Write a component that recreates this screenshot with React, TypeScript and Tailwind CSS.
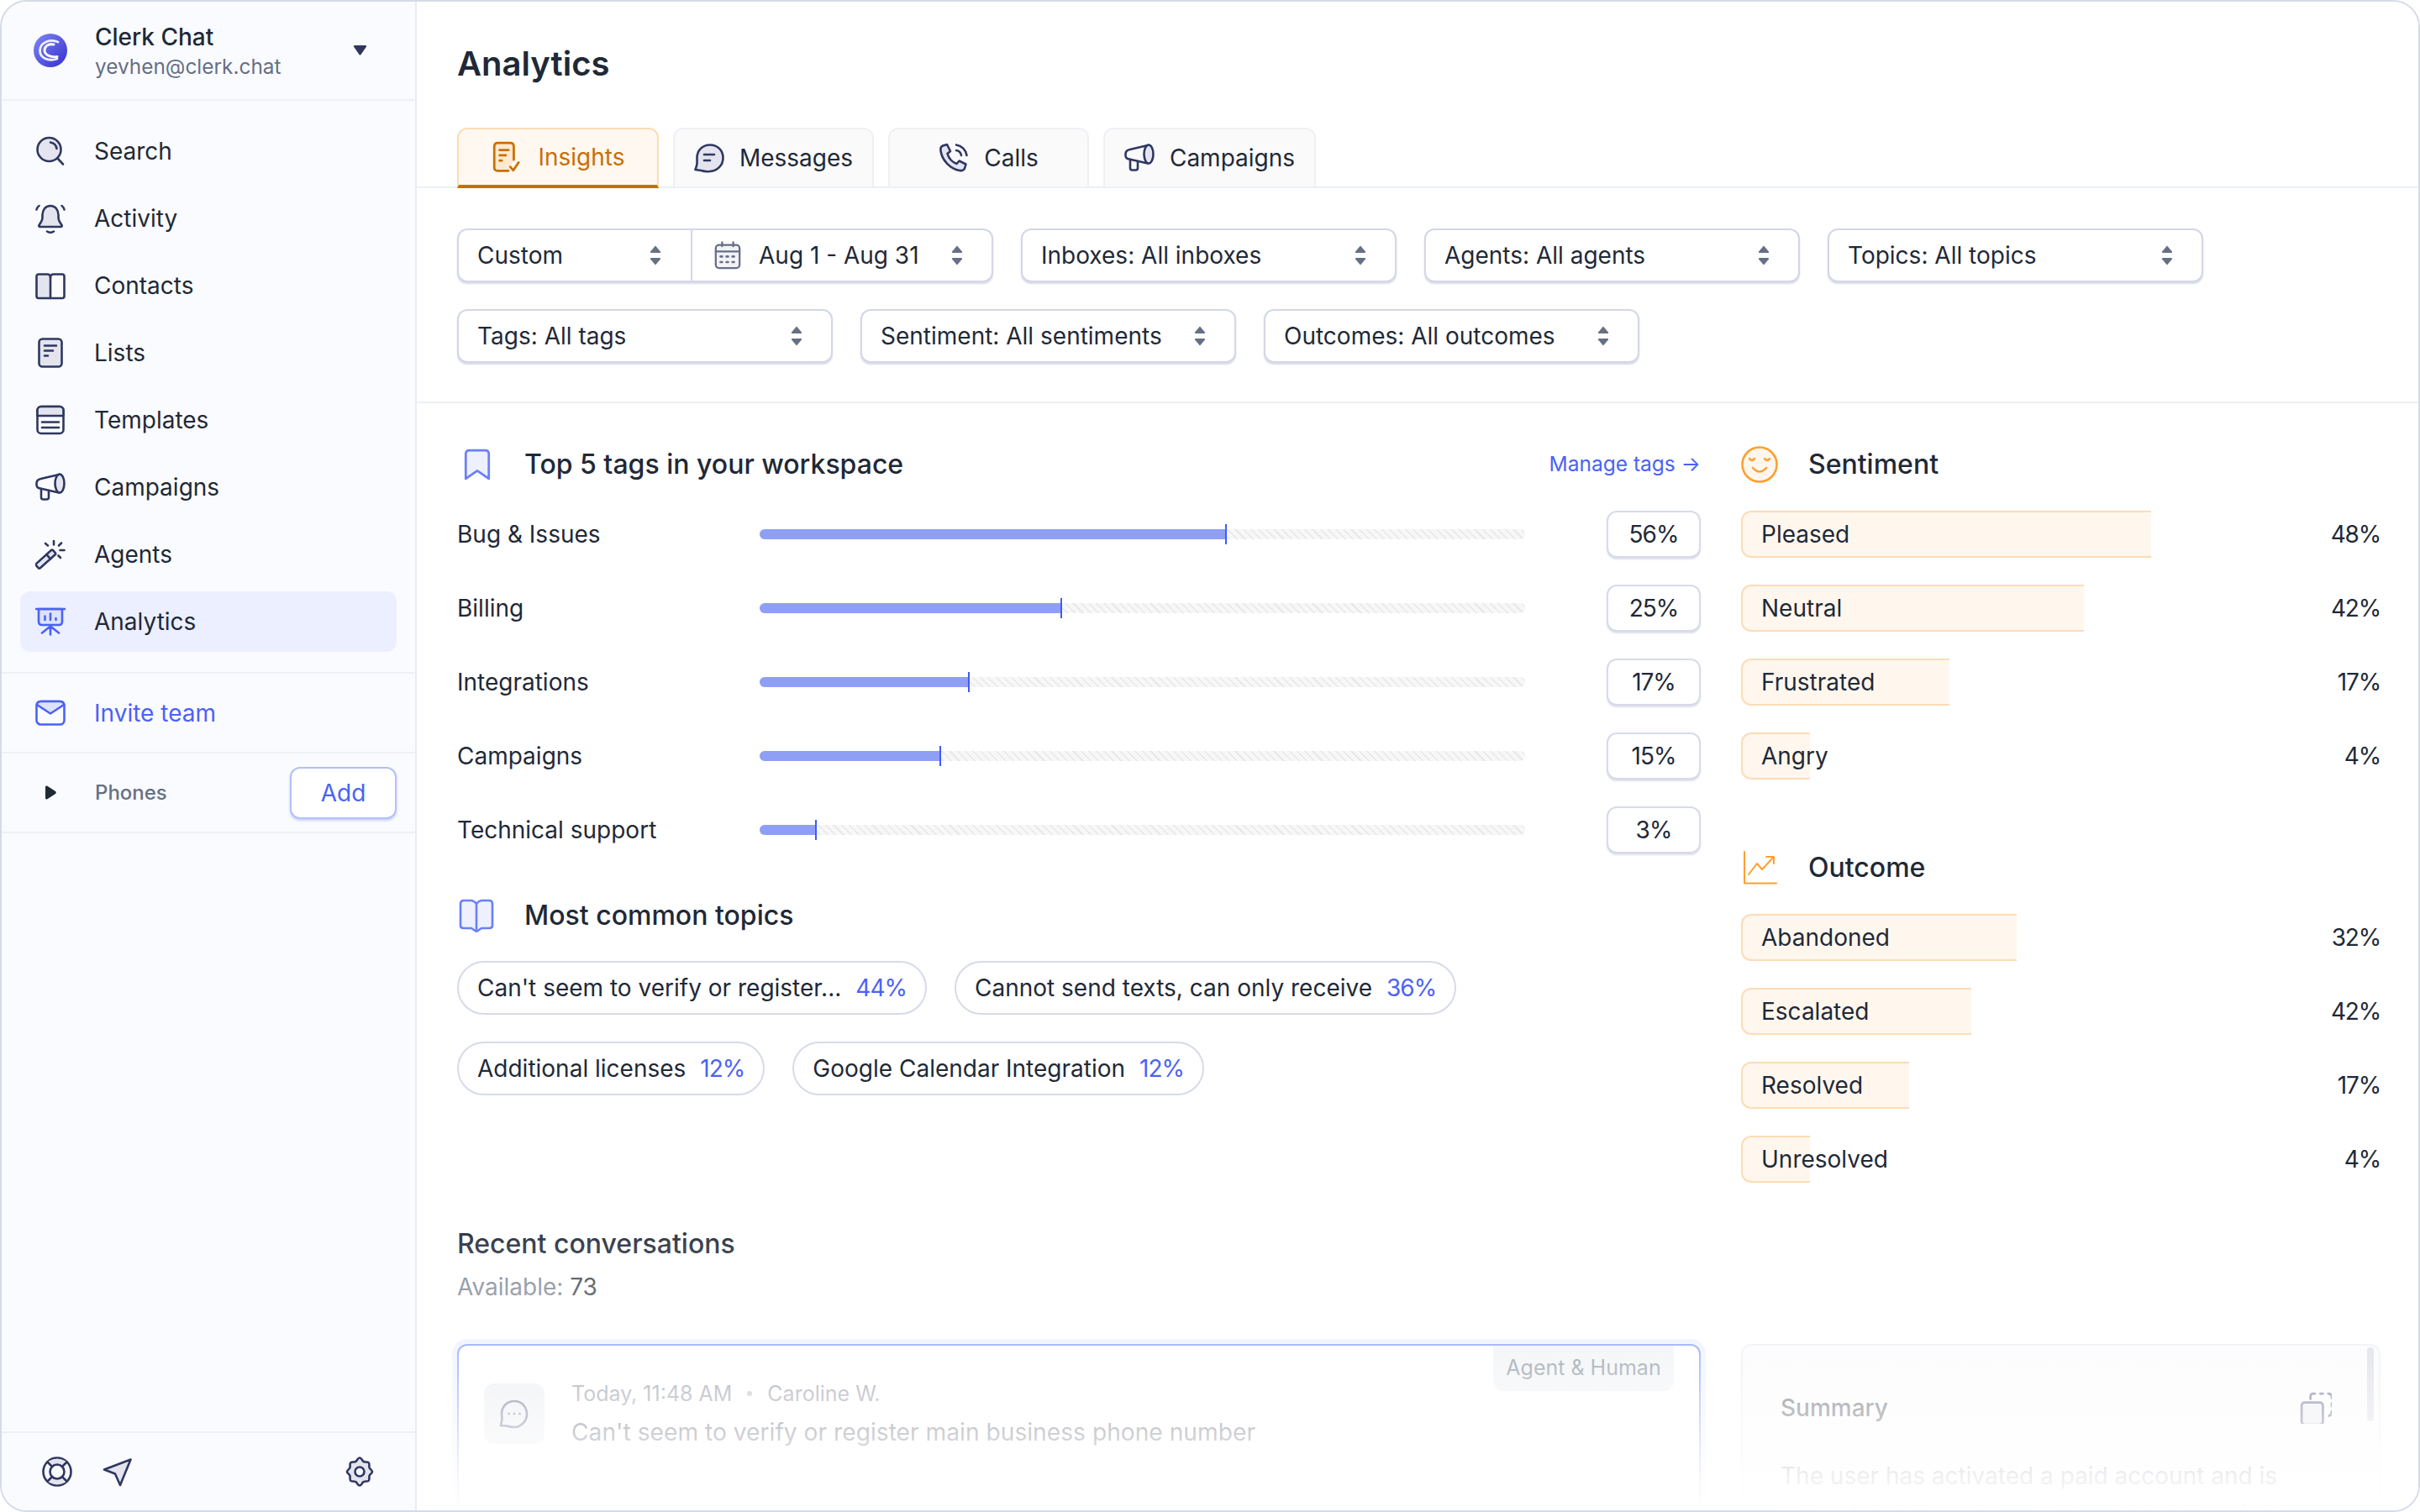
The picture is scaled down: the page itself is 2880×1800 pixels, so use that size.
import React from "react";

const N = "#2f3760";
const NF = "#e3e4ee";
const B = "#4b62f5";
const O = "#ff9f2f";

type P = { s?: number; c?: string; f?: string; w?: number; vb?: string; children: React.ReactNode };
const Ic = ({ s = 36, c = N, f = "none", w = 2.6, vb = "0 0 36 36", children }: P) => (
  <svg width={s} height={s} viewBox={vb} fill={f} stroke={c} strokeWidth={w} strokeLinecap="round" strokeLinejoin="round" className="shrink-0">
    {children}
  </svg>
);

const SearchI = () => (
  <Ic>
    <circle cx="16.5" cy="16" r="14" fill={NF} />
    <path d="M26.5 26.5L33 33.5M18 7.5a9 9 0 0 1 7.5 7.5" fill="none" />
  </Ic>
);
const BellI = () => (
  <Ic>
    <path d="M18 3c-6 0-9.5 5-9.5 11v3c0 3.500-2 6-4 9-.5 1 0 2 1 2h25c1 0 1.500-1 1-2-2-3-4-5.500-4-9v-3c0-6-3.500-11-9.500-11z" fill={NF} />
    <path d="M14 33.500q4 2.500 8 0M1.500 7.500q.5-3 3-4.500M34.500 7.500q-.5-3-3-4.500" fill="none" />
  </Ic>
);
const BookI = () => (
  <Ic>
    <path d="M18 33V8c0-2-1.500-3.500-3.500-3.500H4C2.500 4.500 1.500 5.500 1.500 7v23.500c0 1.500 1 2.500 2.500 2.500z" fill={NF} />
    <path d="M18 8c0-2 1.500-3.500 3.500-3.500H32c1.500 0 2.500 1 2.500 2.500v23.500c0 1.500-1 2.500-2.500 2.500H18" />
  </Ic>
);
const ListI = () => (
  <Ic>
    <rect x="4.500" y="1.500" width="27" height="33" rx="4" fill={NF} />
    <path d="M11 9.500h14M11 15.500h10M11 21.500h4" fill="none" />
  </Ic>
);
const TemplI = () => (
  <Ic>
    <rect x="2.500" y="2" width="31" height="32" rx="4.500" fill="none" />
    <path d="M2.500 13V6.500c0-2.500 2-4.500 4.500-4.500h22c2.500 0 4.500 2 4.500 4.500V13z" fill={NF} />
    <path d="M8 20.500h20M8 27h20" />
  </Ic>
);
const MegaI = ({ s = 36 }: { s?: number }) => (
  <Ic s={s}>
    <path d="M28 3L6.500 8Q1.500 9 1.500 13.500V15Q1.500 19 6 19.500L28 24.500" fill="none" />
    <ellipse cx="29" cy="13.500" rx="5.500" ry="11" fill={NF} />
    <path d="M7 20v10q0 2.500 2.500 2.500h4q2.500 0 2.500-2.500v-8" fill="none" />
  </Ic>
);
const WandI = () => (
  <Ic>
    <g transform="rotate(-42 12 24)">
      <rect x="-1" y="20.500" width="27" height="7" rx="1.500" fill={NF} />
      <path d="M17 20.500v7" />
    </g>
    <path d="M22 2v4.500M12 5l3 2.500M31 4.500l-3 3M29.500 13h5M27.500 19.500l2.500 2.500" fill="none" />
  </Ic>
);
const ChartI = () => (
  <Ic c={B}>
    <path d="M4 3v15q0 4 4 4h20q4 0 4-4V3z" fill="#dde2fd" />
    <path d="M1 3h34M18 22.500V33.500M18 23.500L8 31.500M18 23.500l10 8M11.500 11.500v4.500M18 8.500v7.500M24.500 14v2" fill="none" />
  </Ic>
);
const MailI = () => (
  <Ic c={B}>
    <rect x="1.500" y="4" width="33" height="27.500" rx="5" fill="none" />
    <path d="M2 8q0-4 5-4h22q5 0 5 4l-16 10.500z" fill="#dde2fd" />
  </Ic>
);
const LifeI = () => (
  <Ic>
    <circle cx="18" cy="18" r="16.500" />
    <path d="M6.500 6.500Q18-1 29.500 6.500L24 12q-6-4-12 0zM6.500 29.500Q18 37 29.500 29.500L24 24q-6 4-12 0z" fill={NF} stroke="none" />
    <circle cx="18" cy="18" r="8.500" />
    <path d="M6.500 6.500L12 12M29.500 6.500L24 12M6.500 29.500L12 24M29.500 29.500L24 24" />
  </Ic>
);
const SendI = () => (
  <Ic>
    <path d="M2 15.500L33.500 3.500 21 34 15 20.500z" fill={NF} />
  </Ic>
);
const GearI = () => (
  <Ic>
    <path d="M18 1.500c2 0 2.500 2 4 4 1.500 1.500 5 .5 6.500 1.500 1.800 1.500.5 4 1 6 .5 2 3.500 3 3.500 5s-3 3-3.500 5c-.5 2 .8 4.500-1 6-1.500 1-5 0-6.500 1.500-1.500 2-2 4-4 4s-2.500-2-4-4c-1.500-1.500-5-.5-6.500-1.500-1.800-1.500-.5-4-1-6-.5-2-3.500-3-3.500-5s3-3 3.500-5c.5-2-.8-4.500 1-6 1.500-1 5-0 6.500-1.500 1.500-2 2-4 4-4z" fill={NF} />
    <circle cx="18" cy="18" r="5.500" fill="#fafbff" />
  </Ic>
);
const Updown = () => (
  <svg width="14" height="24" viewBox="0 0 14 24" fill="#667085" className="shrink-0">
    <path d="M7 0.500L13 7.500Q13.500 9 12 9H2Q.5 9 1 7.500z" />
    <path d="M7 23.500L13 16.500Q13.500 15 12 15H2Q.5 15 1 16.500z" />
  </svg>
);
const Cal = () => (
  <Ic s={34} c="#667085" w={2.4} vb="0 0 34 36">
    <rect x="2" y="5" width="30" height="29" rx="4" fill="#f2f3f6" />
    <path d="M2 13h30M10 1.500v5M24 1.500v5" />
    <path d="M8 19.500h2M15.500 19.500h2M23 19.500h2M8 26.500h2M15.500 26.500h2M23 26.500h2" strokeWidth="2.800" />
  </Ic>
);

const Item = ({ icon, label, active, blue }: { icon: React.ReactNode; label: string; active?: boolean; blue?: boolean }) => (
  <div className={active ? "flex h-[72px] items-center gap-[34px] rounded-[12px] bg-[#ecefff] pl-[18px]" : "flex h-[72px] items-center gap-[34px] rounded-[12px] pl-[18px]"}>
    {icon}
    <span className={blue ? "text-[28px] text-[#4b62f5]" : "text-[28px] text-[#1f2937]"}>{label}</span>
  </div>
);

const Sidebar = () => (
  <aside className="flex h-full w-[494px] shrink-0 flex-col border-r-2 border-[#e9ecf2] bg-[#fafbff]">
    <div className="flex h-[118px] shrink-0 items-center border-b-2 border-[#eef0f5] pr-[57px] pl-[38px]">
      <svg width="40" height="40" viewBox="0 0 40 40" className="shrink-0">
        <defs>
          <linearGradient id="lg" x1="0" y1="0" x2="1" y2="1">
            <stop offset="0" stopColor="#7f86f6" />
            <stop offset="1" stopColor="#3530cc" />
          </linearGradient>
        </defs>
        <circle cx="20" cy="20" r="20" fill="url(#lg)" />
        <path d="M29 10C20 6 8 10 7.500 20c0 9 10 13.500 20.500 10" fill="none" stroke="#eef0ff" strokeWidth="2.800" strokeLinecap="round" />
        <path d="M24 13c-6-1.500-11 2-11 7 0 5 7 9 15 7.500" fill="none" stroke="#f6f6ff" strokeWidth="3" strokeLinecap="round" />
      </svg>
      <div className="ml-[33px] flex flex-1 flex-col pt-[2px]">
        <span className="text-[28px] leading-[36px] font-medium text-[#1f2937]">Clerk Chat</span>
        <span className="text-[24.4px] leading-[34px] text-[#667085]">yevhen@clerk.chat</span>
      </div>
      <svg width="17" height="12" viewBox="0 0 16 12" fill={N}>
        <path d="M1.500 0h13q1.500 0 1 1.500L9 11q-1 1-2 0L.5 1.500Q0 0 1.500 0z" />
      </svg>
    </div>
    <nav className="flex shrink-0 flex-col gap-[8px] border-b-2 border-[#eef0f5] px-[22px] py-[24px]">
      <Item icon={<SearchI />} label="Search" />
      <Item icon={<BellI />} label="Activity" />
      <Item icon={<BookI />} label="Contacts" />
      <Item icon={<ListI />} label="Lists" />
      <Item icon={<TemplI />} label="Templates" />
      <Item icon={<MegaI />} label="Campaigns" />
      <Item icon={<WandI />} label="Agents" />
      <Item icon={<ChartI />} label="Analytics" active />
    </nav>
    <div className="flex h-[95px] shrink-0 items-center border-b-2 border-[#eef0f5] px-[22px]">
      <div className="w-full">
        <Item icon={<MailI />} label="Invite team" blue />
      </div>
    </div>
    <div className="flex h-[95px] shrink-0 items-center border-b-2 border-[#eef0f5] pr-[22px] pl-[40px]">
      <span className="flex w-[36px] justify-center">
        <svg width="13" height="17" viewBox="0 0 13 17" fill="#1f2937">
          <path d="M0 2Q0 0 2 .5L12 7q1.500 1.500 0 3L2 16.500Q0 17 0 15z" />
        </svg>
      </span>
      <span className="ml-[35px] flex-1 text-[24px] font-medium text-[#667085]">Phones</span>
      <span className="flex h-[62px] w-[127px] items-center justify-center rounded-[12px] border-2 border-[#b4c0f8] bg-white text-[28px] text-[#4b62f5] shadow-[0_2px_3px_#c8d0f8]">Add</span>
    </div>
    <div className="flex-1" />
    <div className="flex h-[94px] shrink-0 items-center border-t-2 border-[#eef0f5] pr-[48px] pl-[48px]">
      <LifeI />
      <span className="ml-[36px] flex-1">
        <SendI />
      </span>
      <GearI />
    </div>
  </aside>
);

const Tab = ({ icon, label, w, active }: { icon: React.ReactNode; label: string; w: string; active?: boolean }) => (
  <div
    className={
      active
        ? `${w} relative -mb-[2px] flex h-[72px] items-center justify-center gap-[18px] rounded-t-[12px] border-x-2 border-t-2 border-b-4 border-[#fcdcb5] border-b-[#c96f00] bg-[#fff8f0] text-[28px] text-[#c96f00]`
        : `${w} flex h-[70px] items-center justify-center gap-[18px] rounded-t-[12px] border-x-2 border-t-2 border-[#eff0f4] bg-[#fafafb] text-[28px] text-[#1f2937]`
    }
  >
    {icon}
    <span>{label}</span>
  </div>
);

const Sel = ({ label, w = "w-[447px]" }: { label: string; w?: string }) => (
  <div className={`${w} flex h-[64px] items-center justify-between rounded-[12px] border-2 border-[#d3d7e6] bg-white pr-[34px] pl-[22px] text-[28px] text-[#1f2937] shadow-[0_2px_2px_#d8dbe8]`}>
    <span>{label}</span>
    <Updown />
  </div>
);

const Filters = () => (
  <div className="flex shrink-0 flex-col gap-[32px] border-b-2 border-[#edf0f4] pt-[48px] pb-[46px] pl-[48px]">
    <div className="flex gap-[33px]">
      <div className="flex h-[64px] w-[638px] items-center rounded-[12px] border-2 border-[#d3d7e6] bg-white text-[28px] text-[#1f2937] shadow-[0_2px_2px_#d8dbe8]">
        <div className="flex h-full w-[278px] items-center justify-between border-r-2 border-[#d3d7e6] pr-[35px] pl-[22px]">
          <span>Custom</span>
          <Updown />
        </div>
        <div className="flex flex-1 items-center pr-[34px] pl-[25px]">
          <Cal />
          <span className="ml-[20px] flex-1">Aug 1 - Aug 31</span>
          <Updown />
        </div>
      </div>
      <Sel label="Inboxes: All inboxes" />
      <Sel label="Agents: All agents" />
      <Sel label="Topics: All topics" />
    </div>
    <div className="flex gap-[33px]">
      <Sel label="Tags: All tags" />
      <Sel label="Sentiment: All sentiments" />
      <Sel label="Outcomes: All outcomes" />
    </div>
  </div>
);

const tags = [
  { l: "Bug & Issues", p: "56%", w: 556 },
  { l: "Billing", p: "25%", w: 360 },
  { l: "Integrations", p: "17%", w: 250 },
  { l: "Campaigns", p: "15%", w: 216 },
  { l: "Technical support", p: "3%", w: 68 },
];

const TagRow = ({ l, p, w }: { l: string; p: string; w: number }) => (
  <div className="flex h-[56px] items-center">
    <span className="w-[360px] shrink-0 text-[28px] text-[#1f2937]">{l}</span>
    <div className="flex h-[24px] w-[911px] shrink-0 items-center">
      <div className="flex h-[12px] w-full items-center rounded-[6px] bg-[repeating-linear-gradient(45deg,#f7f7f8_0,#f7f7f8_5px,#e8e8ea_5px,#e8e8ea_6.5px)]">
        <div className="relative h-[12px] rounded-l-[6px] border-r-2 border-[#3f5bf6] bg-[#8e9ff5]" style={{ width: w }}>
          <span className="absolute top-[-6px] right-[-2px] h-[24px] w-[2px] bg-[#3f5bf6]" />
        </div>
      </div>
    </div>
    <span className="ml-auto flex h-[56px] w-[112px] items-center justify-center rounded-[12px] border-2 border-[#d7dbe8] bg-white text-[28px] tracking-[-1px] text-[#1f2937] shadow-[0_2px_2px_#dde0ea]">{p}</span>
  </div>
);

const Chip = ({ t, p }: { t: string; p: string }) => (
  <div className="flex h-[64px] items-center gap-[17px] rounded-full border-2 border-[#d7dbe8] bg-white pr-[22px] pl-[22px] text-[28px] text-[#1f2937]">
    <span>{t}</span>
    <span className="tracking-[-1px] text-[#4b62f5]">{p}</span>
  </div>
);

const Bar = ({ l, p, w }: { l: string; p: string; w: number }) => (
  <div className="flex h-[56px] items-center justify-between">
    <div className="h-[56px] shrink-0 rounded-l-[12px] border-y-2 border-l-2 border-[#fddcb5] bg-[#fff7ee]" style={{ width: w }}>
      <div className="flex h-full w-[300px] items-center pl-[22px] text-[28px] text-[#1f2937]">{l}</div>
    </div>
    <span className="text-[28px] tracking-[-1.2px] text-[#1f2937]">{p}</span>
  </div>
);

const H = ({ icon, t, mx = "gap-[36px]" }: { icon: React.ReactNode; t: string; mx?: string }) => (
  <div className={`flex h-[40px] items-center ${mx}`}>
    {icon}
    <span className="text-[32px] font-medium text-[#1f2937]">{t}</span>
  </div>
);

const Main = () => (
  <main className="relative flex h-full flex-1 flex-col overflow-hidden bg-white">
    <div className="flex h-[150px] shrink-0 items-start pt-[52px] pl-[48px]">
      <h1 className="text-[40px] leading-[44px] font-semibold text-[#1f2937]">Analytics</h1>
    </div>
    <div className="flex h-[72px] shrink-0 gap-[17px] border-b-2 border-[#edf0f4] pl-[48px]">
      <Tab
        w="w-[240px]"
        active
        label="Insights"
        icon={
          <Ic c="#c96f00" s={38}>
            <path d="M20 33.500H8q-4 0-4-4V6q0-4 4-4h14q4 0 4 4v15" fill="#ffe9cf" />
            <path d="M10 10h10M10 16h7M10 22h2.500M22 29l3.500 4 6-9" fill="none" />
          </Ic>
        }
      />
      <Tab
        w="w-[239px]"
        label="Messages"
        icon={
          <Ic>
            <path d="M19 2.500C10 2.500 3.500 9 3.500 18c0 3 .5 6-.5 9.500L1.500 32l7 1c3 1 6.500 1.500 10.500 1 8.500-.5 15.500-7 15.500-16S28 2.500 19 2.500z" fill={NF} />
            <path d="M12 14h12M12 21h7" fill="none" />
          </Ic>
        }
      />
      <Tab
        w="w-[239px]"
        label="Calls"
        icon={
          <Ic>
            <path d="M5 3.500l5-1.500 4 8-3.500 3c1.500 5 6 10 11 12l3-3.500 8 4-1.500 5c-1 2-3.500 3-6 2.500C14 31 4 21 2.500 9.500 2 7 3 4.500 5 3.500z" fill={NF} />
            <path d="M21 2.500c6.500 1 11.500 6 12.500 12.500M21 9c3 .5 5.500 3 6 6" fill="none" />
          </Ic>
        }
      />
      <Tab w="w-[253px]" label="Campaigns" icon={<MegaI />} />
    </div>
    <Filters />
    <div className="flex shrink-0 gap-[48px] pl-[48px]">
      <div className="flex w-[1480px] shrink-0 flex-col pt-[53px]">
        <div className="flex items-center justify-between">
          <H
            t="Top 5 tags in your workspace"
            mx="gap-[37px] pl-[5px]"
            icon={
              <Ic s={38} c="#6a80f7" f="#eef0fe" vb="0 0 30 36">
                <path d="M2 34V6q0-4 4-4h18q4 0 4 4v28l-13-9z" />
              </Ic>
            }
          />
          <span className="-mt-[2px] text-[24.5px] text-[#4b62f5]">Manage tags →</span>
        </div>
        <div className="mt-[35px] flex flex-col gap-[32px]">
          {tags.map((t) => (
            <TagRow key={t.l} {...t} />
          ))}
        </div>
        <div className="mt-[54px]">
          <H
            t="Most common topics"
            mx="gap-[36px] pl-[2px]"
            icon={
              <Ic s={42} c="#6a80f7" f="#eef0fe" vb="0 0 42 42">
                <path d="M21 7q-3-4-7-4H6Q2 3 2 7v26q0 3 4 3h9l6 4 6-4h9q4 0 4-3V7q0-4-4-4h-8q-4 0-7 4zM21 7v30" />
              </Ic>
            }
          />
        </div>
        <div className="mt-[34px] flex gap-[33px]">
          <Chip t="Can't seem to verify or register..." p="44%" />
          <Chip t="Cannot send texts, can only receive" p="36%" />
        </div>
        <div className="mt-[32px] flex gap-[33px]">
          <Chip t="Additional licenses" p="12%" />
          <Chip t="Google Calendar Integration" p="12%" />
        </div>
      </div>
      <div className="flex w-[761px] shrink-0 flex-col pt-[53px]">
        <H
          t="Sentiment"
          icon={
            <Ic s={44} c={O} f="#fff7ee" vb="0 0 44 44">
              <circle cx="22" cy="22" r="20.500" />
              <path d="M10 15q3 4 6 0M28 15q3 4 6 0M14 26q8 9 16 0" fill="none" />
            </Ic>
          }
        />
        <div className="mt-[35px] flex flex-col gap-[32px]">
          <Bar l="Pleased" p="48%" w={488} />
          <Bar l="Neutral" p="42%" w={408} />
          <Bar l="Frustrated" p="17%" w={248} />
          <Bar l="Angry" p="4%" w={82} />
        </div>
        <div className="mt-[85px]">
          <H
            t="Outcome"
            icon={
              <Ic s={44} c={O} w={2} vb="0 0 44 44">
                <path d="M4 3v37.500h38M9 30l10-13 6 7 14-15M30 9h9v8" />
              </Ic>
            }
          />
        </div>
        <div className="mt-[35px] flex flex-col gap-[32px]">
          <Bar l="Abandoned" p="32%" w={328} />
          <Bar l="Escalated" p="42%" w={274} />
          <Bar l="Resolved" p="17%" w={200} />
          <Bar l="Unresolved" p="4%" w={82} />
        </div>
      </div>
    </div>
    <div className="shrink-0 pt-[53px] pl-[48px]">
      <div className="text-[32px] leading-[40px] font-medium text-[#1f2937]">Recent conversations</div>
      <div className="mt-[13px] text-[28px] leading-[36px] text-[#747d8c]">
        Available: <span className="text-[#2f3643]">73</span>
      </div>
    </div>
    <div className="flex flex-1 gap-[48px] pt-[50px] pl-[48px]">
      <div className="flex h-[260px] w-[1480px] shrink-0 rounded-[12px] border-2 border-[#607cf6] bg-white pl-[30px] shadow-[0_0_0_6px_#e9edfe]">
        <div className="mt-[45px] flex h-[72px] w-[72px] shrink-0 items-center justify-center rounded-[12px] bg-[#e5e7ec]">
          <Ic s={36} c={N}>
            <path d="M18 3C9 3 3 10 3 18c0 3 1 6 0 9L2 32l7 .5c3 1 6 1.500 9 1.500 8 0 15-7 15-15.500S27 3 18 3z" fill={NF} />
            <path d="M11.500 18h.1M18 18h.1M24.500 18h.1" />
          </Ic>
        </div>
        <div className="ml-[32px] flex flex-1 flex-col pt-[40px]">
          <div className="flex items-center gap-[18px] text-[25px] leading-[34px] text-[#6c7184]">
            <span>Today, 11:48 AM</span>
            <span className="h-[6px] w-[6px] rounded-full bg-[#9ea3b3]" />
            <span>Caroline W.</span>
          </div>
          <div className="mt-[9px] text-[28.2px] leading-[40px] text-[#1f2937]">Can't seem to verify or register main business phone number</div>
        </div>
        <div className="mr-[30px] flex h-[54px] w-[215px] shrink-0 items-center justify-center rounded-b-[12px] bg-[#ebeef2] text-[25px] text-[#626b7a]">Agent &amp; Human</div>
      </div>
      <div className="flex h-[260px] w-[761px] shrink-0 overflow-hidden rounded-[12px] border-2 border-[#e7e9f3] bg-[#fafafd] pt-[2px] pr-[2px]">
        <div className="flex flex-1 flex-col pt-[52px] pl-[45px]">
          <div className="flex items-center justify-between pr-[38px]">
            <span className="text-[28px] leading-[40px] font-medium text-[#1f2937]">Summary</span>
            <Ic s={38}>
              <rect x="2" y="12" width="24" height="25" rx="3.500" fill={NF} />
              <path d="M12 8V5q0-3 3-3h2M23 2h3M32 2q4 0 4 3v2M36 13v3M36 22q0 4-3 5" fill="none" />
            </Ic>
          </div>
          <div className="mt-[39px] w-[640px] text-[28px] leading-[44px] text-[#1f2937]">The user has activated a paid account and is trying to register their main business number</div>
        </div>
        <div className="flex h-full w-[16px] shrink-0 justify-center">
          <div className="h-[88px] w-[8px] rounded-full bg-[#ccd0dc]" />
        </div>
      </div>
    </div>
    <div className="pointer-events-none absolute right-0 bottom-0 left-0 h-[358px] bg-[linear-gradient(to_bottom,rgba(255,255,255,0),rgba(255,255,255,0.92)_88%,#fff)]" />
  </main>
);

export default function App() {
  return (
    <div className="h-[1800px] w-[2880px] overflow-hidden bg-white font-[Inter,sans-serif]">
      <div className="flex h-full w-full overflow-hidden rounded-[32px] border-2 border-[#d5dbe8]">
        <Sidebar />
        <Main />
      </div>
    </div>
  );
}
